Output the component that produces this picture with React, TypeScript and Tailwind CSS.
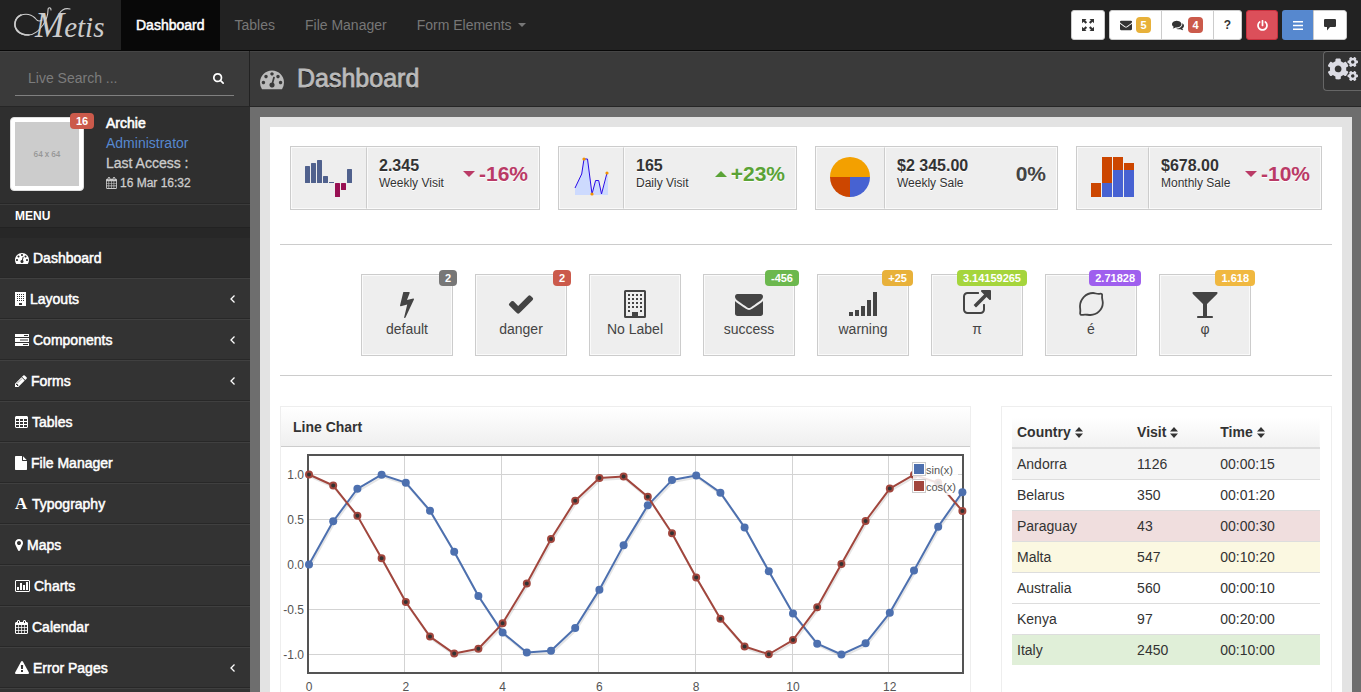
import React from "react";
import { FaCogs, FaPowerOff } from "react-icons/fa";

type IconProps = { className?: string };

const Glyph = ({ d, className, box = "0 0 1792 1792" }: { d: string; className?: string; box?: string }) => (
  <svg viewBox={box} className={className} fill="currentColor" aria-hidden="true">
    <path d={d} />
  </svg>
);

const paths = {
  gauge:
    "M384 1152q0-53-37.5-90.5t-90.5-37.5-90.5 37.5-37.5 90.5 37.5 90.5 90.5 37.5 90.5-37.5 37.5-90.5zm192-448q0-53-37.5-90.5t-90.5-37.5-90.5 37.5-37.5 90.5 37.5 90.5 90.5 37.5 90.5-37.5 37.5-90.5zm428 481l101-382q6-26-7.5-48.5t-38.5-29.5-48 6.5-30 39.5l-101 382q-60 5-107 43.5t-63 98.5q-20 77 20 146t117 89 146-20 89-117q16-60-6-117t-72-91zm660-33q0-53-37.5-90.5t-90.5-37.5-90.5 37.5-37.5 90.5 37.5 90.5 90.5 37.5 90.5-37.5 37.5-90.5zm-640-640q0-53-37.5-90.5t-90.5-37.5-90.5 37.5-37.5 90.5 37.5 90.5 90.5 37.5 90.5-37.5 37.5-90.5zm448 192q0-53-37.5-90.5t-90.5-37.5-90.5 37.5-37.5 90.5 37.5 90.5 90.5 37.5 90.5-37.5 37.5-90.5zm320 448q0 261-141 483-19 29-54 29h-1402q-35 0-54-29-141-221-141-483 0-182 71-348t191-286 286-191 348-71 348 71 286 191 191 286 71 348z",
  bolt:
    "M1333 566q18 20 7 44l-540 1157q-13 25-42 25-4 0-14-2-17-5-25.5-19t-4.5-30l197-808-406 101q-4 1-12 1-18 0-31-11-18-15-13-39l201-825q4-16 17-26t30-10h328q19 0 32 12.5t13 29.5q0 8-5 18l-171 463 396-98q8-2 12-2 19 0 34 15z",
  check:
    "M1671 566q0 40-28 68l-724 724-136 136q-28 28-68 28t-68-28l-136-136-362-362q-28-28-28-68t28-68l136-136q28-28 68-28t68 28l294 295 656-657q28-28 68-28t68 28l136 136q28 28 28 68z",
  envelope:
    "M1792 710v794q0 66-47 113t-113 47h-1472q-66 0-113-47t-47-113v-794q44 49 101 87 362 246 497 345 57 42 92.5 65.5t94.5 48 110 24.5h2q51 0 110-24.5t94.5-48 92.5-65.5q170-123 498-345 57-39 100-87zm0-294q0 79-49 151t-122 123q-376 261-468 325-10 7-42.5 31t-54 38.5-52 32.5-57.5 27-50 9h-2q-23 0-50-9t-57.5-27-52-32.5-54-38.5-42.5-31q-91-64-262-182.5t-205-142.5q-62-42-117-115.5t-55-136.5q0-78 41.5-130t118.5-52h1472q65 0 112.5 47t47.5 113z",
  glass:
    "M1699 186q0 35-43 78l-632 632v768h320q26 0 45 19t19 45-19 45-45 19h-896q-26 0-45-19t-19-45 19-45 45-19h320v-768l-632-632q-43-43-43-78 0-23 18-36.5t38-17.5 43-4h1408q23 0 43 4t38 17.5 18 36.5z",
  external:
    "M1408 928v320q0 119-84.5 203.5t-203.5 84.5h-832q-119 0-203.5-84.5t-84.5-203.5v-832q0-119 84.5-203.5t203.5-84.5h704q14 0 23 9t9 23v64q0 14-9 23t-23 9h-704q-66 0-113 47t-47 113v832q0 66 47 113t113 47h832q66 0 113-47t47-113v-320q0-14 9-23t23-9h64q14 0 23 9t9 23zm384-864v512q0 26-19 45t-45 19-45-19l-176-176-652 652q-10 10-23 10t-23-10l-114-114q-10-10-10-23t10-23l652-652-176-176q-19-19-19-45t19-45 45-19h512q26 0 45 19t19 45z",
  pencil:
    "M491 1536l91-91-235-235-91 91v107h128v128h107zm523-928q0-22-22-22-10 0-17 7l-542 542q-7 7-7 17 0 22 22 22 10 0 17-7l542-542q7-7 7-17zm-54-192l416 416-832 832h-416v-416zm683 96q0 53-37 90l-166 166-416-416 166-165q36-38 90-38 53 0 91 38l235 234q37 39 37 91z",
  file:
    "M1152 512v-472q22 14 36 28l408 408q14 14 28 36h-472zm-128 32q0 40 28 68t68 28h544v1056q0 40-28 68t-68 28h-1344q-40 0-68-28t-28-68v-1600q0-40 28-68t68-28h800v544z",
  marker:
    "M1152 640q0-106-75-181t-181-75-181 75-75 181 75 181 181 75 181-75 75-181zm256 0q0 109-33 179l-364 774q-16 33-47.5 52t-67.5 19-67.5-19-46.5-52l-365-774q-33-70-33-179 0-212 150-362t362-150 362 150 150 362z",
  warning:
    "M1024 1375v-190q0-14-9.5-23.5t-22.5-9.5h-192q-13 0-22.5 9.5t-9.5 23.5v190q0 14 9.5 23.5t22.5 9.5h192q13 0 22.5-9.5t9.5-23.5zm-2-374l18-459q0-12-10-19-13-11-24-11h-220q-11 0-24 11-10 7-10 21l17 457q0 10 10 16.5t24 6.5h185q14 0 23.5-6.5t10.5-16.5zm-14-934l768 1408q35 63-2 126-17 29-46.5 46t-63.5 17h-1536q-34 0-63.5-17t-46.5-46q-37-63-2-126l768-1408q17-31 47-49t65-18 65 18 47 49z",
  search:
    "M1216 832q0-185-131.5-316.5t-316.5-131.5-316.5 131.5-131.5 316.5 131.5 316.5 316.5 131.5 316.5-131.5 131.5-316.5zm512 832q0 52-38 90t-90 38q-54 0-90-38l-343-342q-179 124-399 124-143 0-273.5-55.5t-225-150-150-225-55.5-273.5 55.5-273.5 150-225 225-150 273.5-55.5 273.5 55.5 225 150 150 225 55.5 273.5q0 220-124 399l343 343q37 37 37 90z",
  comments:
    "M1408 768q0 139-94 257t-256.5 186.5-353.5 68.5q-86 0-176-16-124 88-278 128-36 9-86 16h-3q-11 0-20.5-8t-11.5-21q-1-3-1-6.5t.5-6.5 2-6l2.5-5 3.5-5.5 4-5 4.5-5 4-4.5q5-6 23-25t26-29.5 22.5-29 25-38.5 20.5-44q-124-72-195-177t-71-224q0-139 94-257t256.5-186.5 353.5-68.5 353.5 68.5 256.5 186.5 94 257zm384 256q0 120-71 224.5t-195 176.5q10 24 20.5 44t25 38.5 22.5 29 26 29.5 23 25q1 1 4 4.5t4.5 5 4 5 3.5 5.5l2.5 5 2 6 .5 6.5-1 6.5q-3 14-13 22t-22 7q-50-7-86-16-154-40-278-128-90 16-176 16-271 0-472-132 58 4 88 4 161 0 309-45t264-129q125-92 192-212t67-254q0-77-23-152 129 71 204 178t75 230z",
};

const SmallBuilding = ({ className }: IconProps) => (
  <svg viewBox="0 0 11 14" className={className} aria-hidden="true">
    <path
      fill="currentColor"
      fillRule="evenodd"
      d="M0 0h11v14H0zM2 2v1h1V2zm2 0v1h1V2zm2 0v1h1V2zm2 0v1h1V2zM2 4v1h1V4zm2 0v1h1V4zm2 0v1h1V4zm2 0v1h1V4zM2 6v1h1V6zm2 0v1h1V6zm2 0v1h1V6zm2 0v1h1V6zM2 8v1h1V8zm2 0v1h1V8zm2 0v1h1V8zm2 0v1h1V8zM4 11v2h3v-2z"
    />
  </svg>
);

const Tasks = ({ className }: IconProps) => (
  <svg viewBox="0 0 14 12" className={className} aria-hidden="true">
    <path
      fill="currentColor"
      fillRule="evenodd"
      d="M0 0h14v3H0zM0 4h14v4H0zM0 9h14v3H0zM9 1v1h4V1zM5 5.500v1h8v-1zM8 10v1h5v-1z"
    />
  </svg>
);

const Grid = ({ className }: IconProps) => (
  <svg viewBox="0 0 13 12" className={className} aria-hidden="true">
    <path
      fill="currentColor"
      fillRule="evenodd"
      d="M1 0h11l1 1v10l-1 1H1l-1-1V1zM1 3v2h3V3zm4 0v2h3V3zm4 0v2h3V3zM1 6v2h3V6zm4 0v2h3V6zm4 0v2h3V6zM1 9v2h3V9zm4 0v2h3V9zm4 0v2h3V9z"
    />
  </svg>
);

const BarChart = ({ className }: IconProps) => (
  <svg viewBox="0 0 15 12" className={className} aria-hidden="true">
    <path
      fill="currentColor"
      fillRule="evenodd"
      d="M1 0h13l1 1v10l-1 1H1l-1-1V1zM1 1v10h13V1zM2 7h2v3H2zM5 3h2v7H5zM8 5h2v5H8zM11 2h2v8h-2z"
    />
  </svg>
);

const Calendar = ({ className }: IconProps) => (
  <svg viewBox="0 0 13 14" className={className} aria-hidden="true">
    <path
      fill="currentColor"
      fillRule="evenodd"
      d="M0 3l1-1h1V1l1-1h1l1 1v1h3V1l1-1h1l1 1v1h1l1 1v10l-1 1H1l-1-1zM1 5v2h2V5zm2.700 0v2h2.300V5zm3 0v2H9V5zm3 0v2H12V5zM1 7.700V10h2V7.700zm2.700 0V10h2.300V7.700zm3 0V10H9V7.700zm3 0V10H12V7.700zM1 10.700V13h2v-2.300zm2.700 0V13h2.300v-2.300zm3 0V13H9v-2.300zm3 0V13H12v-2.300zM3 1v2h1V1zm6 0v2h1V1z"
    />
  </svg>
);

const BuildingOutline = ({ className }: IconProps) => (
  <svg viewBox="0 0 22 28" className={className} aria-hidden="true">
    <rect x="1" y="1" width="20" height="26" rx="0.500" fill="none" stroke="currentColor" strokeWidth="2" />
    {[4, 8, 12, 16, 20].map((y) =>
      [4, 8, 12, 16].map((x) =>
        y === 20 && (x === 8 || x === 12) ? null : (
          <rect key={`${x}-${y}`} x={x} y={y} width="2" height="2" fill="currentColor" />
        ),
      ),
    )}
    <rect x="8" y="22" width="6" height="5" fill="currentColor" />
  </svg>
);

const Signal = ({ className }: IconProps) => (
  <svg viewBox="0 0 28 28" className={className} fill="currentColor" aria-hidden="true">
    <rect x="0" y="22" width="4" height="4" />
    <rect x="6" y="20" width="4" height="6" />
    <rect x="12" y="16" width="4" height="10" />
    <rect x="18" y="10" width="4" height="16" />
    <rect x="24" y="2" width="4" height="24" />
  </svg>
);

const Lemon = ({ className }: IconProps) => (
  <svg viewBox="0 0 28 28" className={className} fill="none" stroke="currentColor" strokeWidth="1.800" strokeLinejoin="round" aria-hidden="true">
    <path d="M16 3c2.500 0 4 1.400 6.500.800 2-.500 3 .300 2.600 2.400-.400 2.300.700 3.800.700 6.800C25.700 19.500 20 25 13.500 25c-3 0-5-.900-7.500-.200-2.300.500-3.300-.400-2.800-2.600.500-2-.300-3.700-.200-6.200C3.200 9 9 3 16 3z" />
  </svg>
);

const ExpandArrows = ({ className }: IconProps) => (
  <svg viewBox="0 0 12 12" className={className} fill="currentColor" aria-hidden="true">
    <path d="M0 0h4.500L3.200 1.300l1.900 1.900-1.500 1.500-2-1.900L0 4.300zM12 0v4.300l-1.500-1.500-2 1.900L7 3.200l1.900-1.900L7.500 0zM0 12V7.700l1.600 1.500 2-1.900 1.500 1.500-1.900 1.900L4.500 12zM12 12H7.500l1.400-1.300L7 8.800l1.500-1.500 2 1.900L12 7.700z" />
  </svg>
);

const Bubble = ({ className }: IconProps) => (
  <svg viewBox="0 0 12 12" className={className} fill="currentColor" aria-hidden="true">
    <path d="M.8 0h10.400L12 .8v6.400l-.8.800H6l-3 3.500V8H.8L0 7.200V.8z" />
  </svg>
);

const LetterA = () => <span className="w-[13px] font-['Liberation_Serif',serif] text-[17px] font-bold leading-5 [-webkit-text-stroke:0px]">A</span>;

const ChevronLeft = () => (
  <svg viewBox="0 0 5 8" className="ml-auto h-2 w-[5px]" fill="none" stroke="currentColor" strokeWidth="1.300" aria-hidden="true">
    <path d="M4.500.5L1 4l3.500 3.500" />
  </svg>
);

const menu: { label: string; icon: React.ReactNode; sub?: boolean; active?: boolean }[] = [
  { label: "Dashboard", icon: <Glyph d={paths.gauge} className="h-3.5 w-3.5" />, active: true },
  { label: "Layouts", icon: <SmallBuilding className="h-3.5 w-[11px]" />, sub: true },
  { label: "Components", icon: <Tasks className="h-3 w-3.5" />, sub: true },
  { label: "Forms", icon: <Glyph d={paths.pencil} box="128 128 1536 1536" className="h-3 w-3" />, sub: true },
  { label: "Tables", icon: <Grid className="h-3 w-[13px]" /> },
  { label: "File Manager", icon: <Glyph d={paths.file} box="128 0 1536 1792" className="h-3.5 w-3" /> },
  { label: "Typography", icon: <LetterA /> },
  { label: "Maps", icon: <Glyph d={paths.marker} box="384 128 1024 1536" className="h-3 w-2" /> },
  { label: "Charts", icon: <BarChart className="h-3 w-[15px]" /> },
  { label: "Calendar", icon: <Calendar className="h-3.5 w-[13px]" /> },
  { label: "Error Pages", icon: <Glyph d={paths.warning} className="h-3.5 w-3.5" />, sub: true },
];

const Logo = () => (
  <a href="#" aria-label="Metis" className="relative flex h-[50px] w-[121px] items-center pl-[35px] text-[#ccc]">
    <svg viewBox="0 0 60 40" className="absolute left-3 top-1 h-10 w-[60px]" fill="none" stroke="currentColor" strokeLinecap="round" aria-hidden="true">
      <path d="M30 16C27 18 25 17 23 14C17 8 4 9 3 19c-1 8 5 12 13 12 7 0 11-5 15-10 4-6 5-11 5-15 0-3 3-3 3 0" strokeWidth="1.100" />
      <path d="M9 11C3 14 1 21 5 26c3 4 8 5 12 5" strokeWidth="1.600" />
      <path d="M47 10c3-5 7-6 11-5" strokeWidth="1.100" />
    </svg>
    <span className="font-['Liberation_Serif',serif] text-[29px] italic leading-none">
      <span className="text-[35px] leading-none">M</span>etis
    </span>
  </a>
);

const Header = () => (
  <header className="flex h-[51px] shrink-0 items-center justify-between border-b border-[#080808] bg-[#222]">
    <nav className="flex h-full items-center text-sm text-[#777]">
      <Logo />
      <a href="#" className="flex h-full items-center bg-[#080808] px-[15px] text-white [-webkit-text-stroke:0.5px]">Dashboard</a>
      <a href="#" className="px-[15px]">Tables</a>
      <a href="#" className="px-[15px]">File Manager</a>
      <a href="#" className="flex items-center gap-1.5 px-[15px]">
        Form Elements
        <svg viewBox="0 0 8 4" className="h-1 w-2" fill="currentColor" aria-hidden="true"><path d="M0 0h8L4 4z" /></svg>
      </a>
    </nav>
    <div className="flex items-center gap-1 pr-3.5 text-[#333]">
      <button aria-label="Fullscreen" className="flex h-[30px] w-[34px] items-center justify-center rounded-[3px] border border-[#ccc] bg-white">
        <ExpandArrows className="h-3 w-3" />
      </button>
      <div className="flex h-[30px] divide-x divide-[#ccc] overflow-hidden rounded-[3px] border border-[#ccc] bg-white">
        <button aria-label="Messages" className="flex w-[52px] items-center justify-center gap-1">
          <Glyph d={paths.envelope} className="h-3 w-3" />
          <span className="flex h-4 w-[15px] items-center justify-center rounded-sm bg-[#e8b13a] text-[11px] font-bold text-white">5</span>
        </button>
        <button aria-label="Comments" className="flex w-[52px] items-center justify-center gap-1">
          <Glyph d={paths.comments} className="h-3 w-3" />
          <span className="flex h-4 w-[15px] items-center justify-center rounded-sm bg-[#cb5a4b] text-[11px] font-bold text-white">4</span>
        </button>
        <button aria-label="Help" className="w-[27px] text-xs font-bold">?</button>
      </div>
      <button aria-label="Log out" className="flex h-[30px] w-8 items-center justify-center rounded-[3px] border border-[#c9303e] bg-[#dc4f5a] text-white">
        <FaPowerOff className="h-[11px] w-[11px]" />
      </button>
      <div className="flex h-[30px] overflow-hidden rounded-[3px]">
        <button aria-label="Toggle left panel" className="flex w-[31px] items-center justify-center bg-[#5688cf] text-white">
          <svg viewBox="0 0 10 9" className="h-[9px] w-2.5" fill="currentColor" aria-hidden="true"><path d="M0 0h10v1.500H0zM0 3.700h10v1.500H0zM0 7.500h10V9H0z" /></svg>
        </button>
        <button aria-label="Toggle right panel" className="flex w-[34px] items-center justify-center rounded-r-[3px] border border-[#ccc] bg-white">
          <Bubble className="h-3 w-3" />
        </button>
      </div>
    </div>
  </header>
);

const Sidebar = () => (
  <aside className="flex w-[250px] shrink-0 flex-col bg-[#333]">
    <form className="h-14 shrink-0 border-b border-r border-b-[#262626] border-r-[#222] bg-[#3a3a3a] px-[15px] pt-2.5 shadow-[inset_0_1px_0_#454545]">
      <div className="flex h-[35px] items-center border-b border-[#808080] pl-[13px] pr-2.5">
        <input aria-label="Live Search" placeholder="Live Search ..." className="min-w-0 flex-1 bg-transparent text-sm text-white outline-none placeholder:text-[#7c7c7c]" />
        <button type="button" aria-label="Search" className="text-white"><Glyph d={paths.search} box="64 128 1664 1664" className="h-[11px] w-[11px]" /></button>
      </div>
    </form>
    <div className="flex gap-[22px] border-b border-[#272727] bg-[#2f2f2f] pb-2.5 pl-2.5 pt-2.5">
      <div className="relative h-[74px] w-[74px] rounded-[4px] border border-[#ddd] bg-white p-1">
        <div className="flex h-16 w-16 items-center justify-center bg-[#ccc] font-['Open_Sans',sans-serif] text-[8px] font-semibold text-[#969696]">64 x 64</div>
        <span className="absolute -right-[11px] -top-[5px] flex h-4 w-6 items-center justify-center rounded-sm bg-[#cb5a4b] text-[11px] font-bold text-white">16</span>
      </div>
      <div className="-mt-1 text-sm leading-5 text-[#ccc] [-webkit-text-stroke:0.3px]">
        <h5 className="text-white [-webkit-text-stroke:0.6px]">Archie</h5>
        <a href="#" className="block text-[#5688cf] [-webkit-text-stroke:0px]">Administrator</a>
        <p>Last Access :</p>
        <p className="flex items-center gap-[3px] text-xs leading-5"><Calendar className="h-3 w-[11px]" />16 Mar 16:32</p>
      </div>
    </div>
    <h6 className="h-[23px] shrink-0 border-t border-[#3b3b3b] bg-[#2d2d2d] pl-[15px] text-xs font-bold leading-[22px] text-white">MENU</h6>
    <div className="h-[11px] shrink-0 border-t border-[#222] bg-[#272727]" />
    <ul className="border-b border-[#404040]">
      {menu.map((m) => (
        <li key={m.label} className={m.active ? "bg-[#2b2b2b]" : "border-t border-[#404040]"}>
          <a href="#" className="flex h-10 items-center gap-1 border-b border-[#282828] px-[15px] text-sm text-white [-webkit-text-stroke:0.5px]">
            {m.icon}
            {m.label}
            {m.sub && <ChevronLeft />}
          </a>
        </li>
      ))}
    </ul>
  </aside>
);

const WeeklyBars = () => (
  <svg viewBox="0 0 47 37" className="h-[37px] w-[47px]" aria-hidden="true">
    <g fill="#50618d">
      <rect x="0" y="6" width="5" height="17" rx="0.500" />
      <rect x="6" y="3" width="5" height="20" rx="0.500" />
      <rect x="12" y="0" width="5" height="23" rx="0.500" />
      <rect x="18" y="16" width="5" height="7" rx="0.500" />
      <rect x="24" y="22" width="5" height="1" />
      <rect x="42" y="9" width="5" height="14" rx="0.500" />
    </g>
    <rect x="30" y="23" width="5" height="14" rx="0.500" fill="#981053" />
    <rect x="36" y="23" width="5" height="7" rx="0.500" fill="#981053" />
  </svg>
);

const DailyLine = () => (
  <svg viewBox="0 0 36 40" className="-mt-[3px] h-10 w-9" aria-hidden="true">
    <path d="M2 31L8.700 17 11 2h3.500L19 37l3.600-13.500h3.100L28.500 37 35 16v22H2z" fill="#cddafe" />
    <path d="M2 31L8.700 17 11 2h3.500L19 37l3.600-13.500h3.100L28.500 37 34 16" fill="none" stroke="#2a0be8" />
    <circle cx="11" cy="2" r="1.600" fill="#f39200" />
    <circle cx="19" cy="37" r="1.600" fill="#f39200" />
    <circle cx="34" cy="16" r="1.600" fill="#f39200" />
  </svg>
);

const SalePie = () => (
  <svg viewBox="0 0 40 40" className="-mt-[3px] h-10 w-10" aria-hidden="true">
    <path d="M0 20a20 20 0 0 1 40 0z" fill="#f3a000" />
    <path d="M0 20a20 20 0 0 0 20 20V20z" fill="#cc4600" />
    <path d="M40 20a20 20 0 0 1-20 20V20z" fill="#4762d2" />
  </svg>
);

const MonthlyStack = () => (
  <svg viewBox="0 0 43 40" className="-mt-[3px] h-10 w-[43px]" aria-hidden="true">
    <g fill="#cc4600">
      <rect x="0" y="26" width="10" height="14" />
      <rect x="11" y="0" width="10" height="26" />
      <rect x="22" y="0" width="10" height="13" />
      <rect x="33" y="6" width="10" height="7" />
    </g>
    <g fill="#4762d2">
      <rect x="11" y="26" width="10" height="14" />
      <rect x="22" y="13" width="10" height="27" />
      <rect x="33" y="13" width="10" height="27" />
    </g>
  </svg>
);

const Arrow = ({ up }: { up?: boolean }) => (
  <svg viewBox="0 0 12 6" className="h-1.5 w-3" fill="currentColor" aria-hidden="true">
    <path d={up ? "M0 6h12L6 0z" : "M0 0h12L6 6z"} />
  </svg>
);

const stats = [
  { value: "2.345", label: "Weekly Visit", pct: "-16%", arrow: <Arrow />, chart: <WeeklyBars />, box: "w-[250px]", pane: "w-[76px]", tone: "text-[#ba3a66]" },
  { value: "165", label: "Daily Visit", pct: "+23%", arrow: <Arrow up />, chart: <DailyLine />, box: "w-[239px]", pane: "w-[65px]", tone: "text-[#5aa336]" },
  { value: "$2 345.00", label: "Weekly Sale", pct: "0%", arrow: null, chart: <SalePie />, box: "w-[243px]", pane: "w-[69px]", tone: "text-[#444]" },
  { value: "$678.00", label: "Monthly Sale", pct: "-10%", arrow: <Arrow />, chart: <MonthlyStack />, box: "w-[246px]", pane: "w-[72px]", tone: "text-[#ba3a66]" },
];

const Stats = () => (
  <ul className="flex justify-center gap-[18px] border-b border-[#ccc] pb-[34px] pt-[9px]">
    {stats.map((s) => (
      <li key={s.label} className={`${s.box} flex h-16 border border-[#ccc] bg-[#eee] [text-shadow:0_1px_0_#fff]`}>
        <div className={`${s.pane} flex shrink-0 items-center justify-center border border-[#fafafa] border-r-[#ccc] pr-0.5`}>{s.chart}</div>
        <div className="flex flex-1 border border-[#fafafa] pl-[11px] pr-2.5 pt-2">
          <div className="whitespace-nowrap text-[#333]">
            <strong className="block text-base leading-[19px]">{s.value}</strong>
            <span className="block text-xs leading-4">{s.label}</span>
          </div>
          <div className={`${s.tone} ml-auto flex h-9 items-center gap-1 text-[21px] font-bold`}>
            {s.arrow}
            {s.pct}
          </div>
        </div>
      </li>
    ))}
  </ul>
);

const quick = [
  { label: "default", badge: "2", tone: "bg-[#777]", icon: <Glyph d={paths.bolt} className="h-7 w-7" /> },
  { label: "danger", badge: "2", tone: "bg-[#cb5a4b]", icon: <Glyph d={paths.check} className="h-7 w-7" /> },
  { label: "No Label", badge: "", tone: "", icon: <BuildingOutline className="h-7 w-[22px]" /> },
  { label: "success", badge: "-456", tone: "bg-[#6cb84e]", icon: <Glyph d={paths.envelope} className="h-7 w-7" /> },
  { label: "warning", badge: "+25", tone: "bg-[#e8b13a]", icon: <Signal className="h-7 w-7" /> },
  { label: "π", badge: "3.14159265", tone: "bg-[#a5d53c]", icon: <Glyph d={paths.external} className="h-7 w-7" /> },
  { label: "é", badge: "2.71828", tone: "bg-[#9f5fee]", icon: <Lemon className="h-7 w-7" /> },
  { label: "φ", badge: "1.618", tone: "bg-[#f0b840]", icon: <Glyph d={paths.glass} className="h-7 w-7" /> },
];

const QuickButtons = () => (
  <div className="flex justify-center gap-[22px] border-b border-[#ccc] pb-[19px] pt-[29px]">
    {quick.map((q) => (
      <a
        key={q.label}
        href="#"
        className="relative flex h-[82px] w-[92px] flex-col items-center border border-[#ccc] bg-[#eee] pt-[15px] text-sm leading-[22px] text-[#444] shadow-[inset_0_0_0_1px_#fafafa]"
      >
        {q.icon}
        {q.label}
        {q.badge && (
          <span className={`${q.tone} absolute -right-[5px] -top-[5px] flex h-4 items-center rounded-sm px-1.5 text-[11px] font-bold leading-4 text-white`}>
            {q.badge}
          </span>
        )}
      </a>
    ))}
  </div>
);

const xs = Array.from({ length: 28 }, (_, i) => i * 0.5);
const px = (x: number) => 28 + x * 48.4;
const py = (y: number) => 117.5 - y * 90;
const line = (f: (x: number) => number) => xs.map((x) => `${px(x)},${py(f(x))}`).join(" ");

const LineChart = () => (
  <svg viewBox="0 0 689 260" className="block h-auto w-full font-['Liberation_Sans',sans-serif]" role="img" aria-label="Line chart of sin(x) and cos(x)">
    <g stroke="#d3d3d3">
      {[2, 4, 6, 8, 10, 12].map((x) => <line key={x} x1={Math.floor(px(x)) - 0.5} x2={Math.floor(px(x)) - 0.5} y1="8" y2="226" />)}
      {[1, 0.5, 0, -0.5, -1].map((y) => <line key={y} x1="28" x2="682" y1={Math.floor(py(y)) + 0.5} y2={Math.floor(py(y)) + 0.5} />)}
    </g>
    <rect x="27" y="8" width="655" height="218" fill="none" stroke="#545454" strokeWidth="2" />
    <g fill="#545454" fontSize="12">
      {[1, 0.5, 0, -0.5, -1].map((y) => <text key={y} x="23" y={py(y) + 4} textAnchor="end">{y.toFixed(1)}</text>)}
      {[0, 2, 4, 6, 8, 10, 12].map((x) => <text key={x} x={px(x)} y="244" textAnchor="middle">{x}</text>)}
    </g>
    <g fill="none" strokeLinejoin="round">
      <polyline points={line(Math.sin)} stroke="#000" strokeOpacity="0.100" strokeWidth="2" transform="translate(1 2)" />
      <polyline points={line(Math.sin)} stroke="#4d70af" strokeWidth="2" />
      {xs.map((x) => <circle key={x} cx={px(x)} cy={py(Math.sin(x))} r="4" fill="#4d70af" />)}
      <polyline points={line(Math.cos)} stroke="#000" strokeOpacity="0.100" strokeWidth="2" transform="translate(1 2)" />
      <polyline points={line(Math.cos)} stroke="#a1463d" strokeWidth="2" />
      {xs.map((x) => <circle key={x} cx={px(x)} cy={py(Math.cos(x))} r="3" fill="#333" stroke="#a1463d" strokeWidth="2" />)}
    </g>
    <rect x="632" y="14" width="45" height="34" fill="#fff" fillOpacity="0.850" />
    <rect x="631.500" y="15.500" width="13" height="13" fill="#fff" stroke="#ccc" />
    <rect x="633" y="17" width="10" height="10" fill="#4d70af" />
    <rect x="631.500" y="32.500" width="13" height="13" fill="#fff" stroke="#ccc" />
    <rect x="633" y="34" width="10" height="10" fill="#a1463d" />
    <g fill="#545454" fontSize="11">
      <text x="645" y="27">sin(x)</text>
      <text x="645" y="44">cos(x)</text>
    </g>
  </svg>
);

const rows = [
  { c: "Andorra", v: "1126", t: "00:00:15", bg: "bg-[#f4f4f4]" },
  { c: "Belarus", v: "350", t: "00:01:20", bg: "bg-white" },
  { c: "Paraguay", v: "43", t: "00:00:30", bg: "bg-[#f0dede]" },
  { c: "Malta", v: "547", t: "00:10:20", bg: "bg-[#fbf8e1]" },
  { c: "Australia", v: "560", t: "00:00:10", bg: "bg-white" },
  { c: "Kenya", v: "97", t: "00:20:00", bg: "bg-white" },
  { c: "Italy", v: "2450", t: "00:10:00", bg: "bg-[#e0efd8]" },
];

const Sort = () => (
  <svg viewBox="0 0 8 11" className="h-[11px] w-2" fill="currentColor" aria-hidden="true">
    <path d="M0 4.500L4 0l4 4.500zM0 6.500h8L4 11z" />
  </svg>
);

const VisitTable = () => (
  <section className="border border-[#eee] pl-2.5 pr-[11px] pt-2.5">
    <table className="w-full table-fixed border-separate border-spacing-0 text-left text-sm leading-5 text-[#333]">
      <colgroup>
        <col className="w-[39%]" />
        <col className="w-[27%]" />
        <col className="w-[34%]" />
      </colgroup>
      <thead>
        <tr className="bg-linear-to-b from-white to-[#f1f1f1]">
          {["Country", "Visit", "Time"].map((h) => (
            <th key={h} className="border-b-2 border-[#ddd] p-[5px]">
              <span className="flex items-center gap-1">{h}<Sort /></span>
            </th>
          ))}
        </tr>
      </thead>
      <tbody>
        {rows.map((r, i) => (
          <tr key={r.c} className={`${r.bg} ${i === 0 ? "" : "[&>td]:border-t"}`}>
            <td className="border-[#ddd] p-[5px]">{r.c}</td>
            <td className="border-[#ddd] p-[5px]">{r.v}</td>
            <td className="border-[#ddd] p-[5px]">{r.t}</td>
          </tr>
        ))}
      </tbody>
    </table>
  </section>
);

export default function App() {
  return (
    <div className="flex h-screen flex-col overflow-hidden bg-[#333] font-['Liberation_Sans',Arial,sans-serif]">
      <Header />
      <div className="flex min-h-0 flex-1">
        <Sidebar />
        <div className="flex min-w-0 flex-1 flex-col">
          <div className="flex h-14 shrink-0 items-start justify-between border-b border-[#262626] bg-[#3a3a3a] shadow-[inset_0_1px_0_#454545]">
            <h1 className="flex h-14 items-center gap-[13px] pl-2.5 text-[25px] text-[#bbb] [-webkit-text-stroke:0.8px] [text-shadow:0_1px_0_#000]">
              <Glyph d={paths.gauge} className="h-6 w-6" />
              Dashboard
            </h1>
            <button aria-label="Settings" className="flex h-10 w-[38px] items-start justify-center rounded-l-[4px] border border-r-0 border-[#666] bg-[#333] pt-0.5 text-[#dcdce4]">
              <FaCogs className="h-[30px] w-[30px]" />
            </button>
          </div>
          <div className="flex-1 bg-[#6e6e6e] pl-2.5 pr-[9px] pt-2.5">
            <div className="h-full bg-[#e3e3e3] px-2.5 pt-2.5">
              <main className="h-full bg-white px-2.5 pt-2.5">
                <Stats />
                <QuickButtons />
                <div className="grid grid-cols-[691fr_331fr] gap-[30px] pt-[30px]">
                  <section className="border border-[#eee]">
                    <h5 className="h-10 border-b border-[#ccc] bg-linear-to-b from-white to-[#efefef] pl-3 text-sm font-bold leading-10 text-[#333]">Line Chart</h5>
                    <LineChart />
                  </section>
                  <VisitTable />
                </div>
              </main>
            </div>
          </div>
        </div>
      </div>
    </div>
  );
}
